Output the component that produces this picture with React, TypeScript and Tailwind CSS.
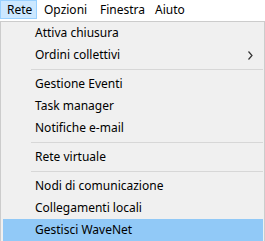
import React from 'react';

type Entry = { label: string; submenu?: boolean; active?: boolean } | 'sep';

const entries: Entry[] = [
  { label: 'Attiva chiusura' },
  { label: 'Ordini collettivi', submenu: true },
  'sep',
  { label: 'Gestione Eventi' },
  { label: 'Task manager' },
  { label: 'Notifiche e-mail' },
  'sep',
  { label: 'Rete virtuale' },
  'sep',
  { label: 'Nodi di comunicazione' },
  { label: 'Collegamenti locali' },
  { label: 'Gestisci WaveNet', active: true },
];

export default function App() {
  return (
    <div className="w-[265px] h-[241px] overflow-hidden bg-white text-[12px] text-black font-['Noto_Sans',sans-serif]">
      {/* menu bar */}
      <div className="flex h-[21px] items-start">
        <div className="w-[37px] h-[19px] flex items-center px-[6px] border border-[#99d1ff] bg-[#cce8ff]">Rete</div>
        <div className="w-[56px] h-[19px] flex items-center pl-[7px] whitespace-nowrap">Opzioni</div>
        <div className="w-[55px] h-[19px] flex items-center pl-[7px] whitespace-nowrap">Finestra</div>
        <div className="h-[19px] flex items-center pl-[7px]">Aiuto</div>
      </div>

      {/* dropdown */}
      <div className="border border-[#cccccc] bg-[#f0f0f0] pl-[2px] pr-[1px] h-[230px]">
        {entries.map((e, i) =>
          e === 'sep' ? (
            <div key={i} className="h-[7px] flex items-center pl-[28px]">
              <div className="h-px w-full bg-[#d7d7d7]" />
            </div>
          ) : (
            <div
              key={i}
              className={`h-[22px] flex items-center pl-[32px] pr-[10px] ${e.active ? 'bg-[#91c9f7]' : ''}`}
            >
              <span className="flex-1">{e.label}</span>
              {e.submenu && (
                <svg width="5" height="9" viewBox="0 0 5 9">
                  <polyline points="0.5,0.5 4,4.5 0.5,8.5" fill="none" stroke="#333" strokeWidth="1.2" />
                </svg>
              )}
            </div>
          )
        )}
      </div>
    </div>
  );
}
